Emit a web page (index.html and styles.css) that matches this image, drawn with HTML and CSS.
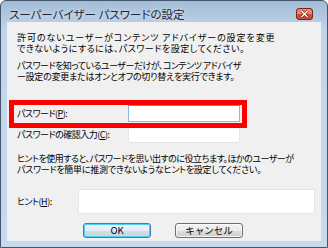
FILE: index.html
```html
<!DOCTYPE html>
<html lang="ja">
<head>
    <meta charset="UTF-8">
    <title>スーパーバイザー パスワードの設定</title>
    <link rel="stylesheet" href="styles.css">
</head>
<body>
    <div class="window">
        <div class="titlebar">
            <span class="title">スーパーバイザー パスワードの設定</span>
            <span class="close-btn" title="閉じる">
                <svg width="9" height="8" viewBox="0 0 9 8">
                    <path d="M1.5 1 L7.5 7 M7.5 1 L1.5 7" stroke="#6e2418" stroke-width="2.8"/>
                    <path d="M1.5 1 L7.5 7 M7.5 1 L1.5 7" stroke="#ffffff" stroke-width="1.4"/>
                </svg>
            </span>
        </div>

        <div class="content">
            <p class="note first">
                <span class="loose">許可のないユーザーがコンテンツ アドバイザーの設定を変更</span><br>
                <span class="roomy">できないようにするには、パスワードを設定してください。</span>
            </p>
            <p class="note">
                <span class="tight">パスワードを知っているユーザーだけが、コンテンツ アドバイザ</span><br>
                <span class="snug">ー設定の変更またはオンとオフの切り替えを実行できます。</span>
            </p>

            <div class="field marked">
                <label class="field-label">パスワード(<u>P</u>):</label>
                <div class="textbox focused"></div>
            </div>
            <div class="field confirm">
                <label class="field-label">パスワードの確認入力(<u>C</u>):</label>
                <div class="textbox"></div>
            </div>

            <p class="note hint-note">
                <span class="tight">ヒントを使用すると、パスワードを思い出すのに役立ちます。ほかのユーザーが</span><br>
                <span class="snug">パスワードを簡単に推測できないようなヒントを設定してください。</span>
            </p>

            <div class="field hint">
                <label class="field-label">ヒント(<u>H</u>):</label>
                <div class="textbox"></div>
            </div>

            <div class="buttons">
                <button class="btn default">OK</button>
                <button class="btn">キャンセル</button>
            </div>
        </div>
    </div>
</body>
</html>
```

FILE: styles.css
```css
body {
    margin: 0;
    width: 328px;
    height: 248px;
    overflow: hidden;
    font-family: "Noto Sans CJK JP", "Noto Sans", sans-serif;
    font-size: 9px;
    font-feature-settings: "palt";
    color: #000;
    background: #fff;
}

.window {
    box-sizing: border-box;
    width: 328px;
    height: 248px;
    padding: 0 6px 6px;
    border: 1px solid #44566b;
    border-radius: 6px 6px 0 0;
    background: linear-gradient(180deg, #a3bcd7 0%, #c0d5eb 12%, #c6d9ee 100%);
}

.titlebar {
    display: flex;
    align-items: center;
    justify-content: space-between;
    box-sizing: border-box;
    height: 21px;
    padding: 4px 8px 0 2px;
}

.title {
    font-size: 11.5px;
    color: #1b2735;
    text-shadow: 0 0 4px rgba(255, 255, 255, 0.8);
    white-space: nowrap;
}

.close-btn {
    display: flex;
    flex: none;
    align-items: center;
    justify-content: center;
    box-sizing: border-box;
    width: 17px;
    height: 12px;
    border: 1px solid #7a2618;
    border-radius: 3px;
    background: #cf4a32;
    box-shadow: inset 0 5px 0 #e08a76;
}

.close-btn svg {
    display: block;
}

.content {
    display: flex;
    flex-direction: column;
    box-sizing: border-box;
    height: 219px;
    padding: 10px 6px 0 10px;
    background: #f0f0f0;
}

.note {
    margin: 6px 0 0;
    line-height: 11px;
    white-space: nowrap;
}

.note.first {
    margin-top: 0;
}

.note.hint-note {
    margin-top: 10px;
}

.loose { letter-spacing: 0.9px; }
.roomy { letter-spacing: 0.5px; }
.snug { letter-spacing: -0.25px; }
.tight { letter-spacing: -0.5px; }

.field {
    display: flex;
    align-items: center;
    margin-top: 23px;
}

.field-label {
    flex: none;
    width: 111px;
    letter-spacing: -0.5px;
    white-space: nowrap;
}

.textbox {
    box-sizing: border-box;
    width: 112px;
    height: 17px;
    background: #fff;
    border: 1px solid #e3e6ec;
}

.textbox.focused {
    border-color: #8fb6de;
    border-top-color: #5d8fbf;
}

.field.marked {
    position: relative;
    align-self: flex-start;
}

/* red annotation frame drawn over the dialog */
.field.marked::after {
    content: "";
    position: absolute;
    top: -5px;
    bottom: -6px;
    left: -8px;
    right: -7px;
    border: 5px solid #ff0000;
}

.field.confirm {
    margin-top: 4px;
}

.field.hint {
    margin-top: 14px;
}

.field.hint .field-label {
    width: 61px;
}

.field.hint .textbox {
    flex: 1;
    height: 25px;
}

.buttons {
    display: flex;
    gap: 24px;
    margin-top: 9px;
    padding-left: 66px;
}

.btn {
    box-sizing: border-box;
    width: 68px;
    height: 15px;
    padding: 0;
    font-family: inherit;
    font-size: 9.5px;
    line-height: 13px;
    color: #000;
    border: 1px solid #707070;
    border-radius: 3px;
    background: linear-gradient(180deg, #f2f2f2 0%, #ebebeb 50%, #dddddd 50%, #cfcfcf 100%);
    box-shadow: inset 0 0 0 1px rgba(255, 255, 255, 0.7);
}

.btn.default {
    border-color: #3c7fb1;
    box-shadow: inset 0 0 0 1px #4fd1f5;
    background: linear-gradient(180deg, #eef5f9 0%, #e3edf3 50%, #d3dfe6 50%, #c8d4db 100%);
}
```
